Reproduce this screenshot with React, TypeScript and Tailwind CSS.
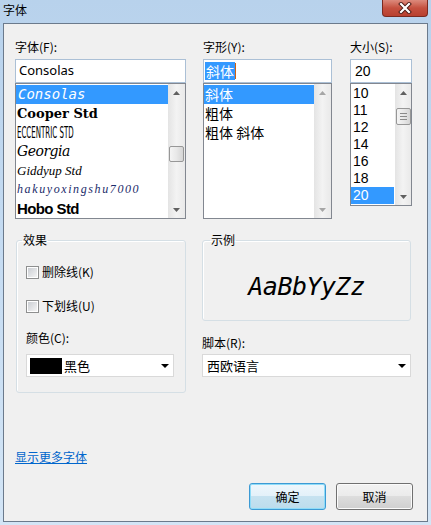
import React from "react";

type ArrowProps = { up?: boolean; light?: boolean };

function Arrow({ up, light }: ArrowProps) {
  return (
    <svg width="7" height="4" viewBox="0 0 7 4" className="block">
      <path d={up ? "M3.5 0 L7 4 L0 4 Z" : "M0 0 L7 0 L3.5 4 Z"} fill={light ? "#a6a6a6" : "#606060"} />
    </svg>
  );
}

type ScrollProps = { thumbClass?: string; grip?: boolean; light?: boolean; className: string };

function ScrollBar({ thumbClass, grip, light, className }: ScrollProps) {
  return (
    <div className={`flex flex-col bg-gradient-to-r from-[#e4e4e4] via-[#f3f3f3] to-[#e9e9e9] ${className}`}>
      <div className="h-[17px] flex items-center justify-center shrink-0">
        <Arrow up light={light} />
      </div>
      <div className="flex-1">
        {thumbClass && (
          <div
            className={`mx-auto w-[15px] rounded-[2px] border border-[#979797] bg-gradient-to-r from-[#f4f4f4] via-[#e8e8e8] to-[#d5d5d5] flex flex-col items-center justify-center gap-[2px] ${thumbClass}`}
          >
            {grip && (
              <>
                <div className="w-[7px] h-px bg-[#8a8a8a]" />
                <div className="w-[7px] h-px bg-[#8a8a8a]" />
                <div className="w-[7px] h-px bg-[#8a8a8a]" />
              </>
            )}
          </div>
        )}
      </div>
      <div className="h-[17px] flex items-center justify-center shrink-0">
        <Arrow light={light} />
      </div>
    </div>
  );
}

function CheckBox({ label }: { label: string }) {
  return (
    <div className="flex items-center h-[16px]">
      <div className="w-[13px] h-[13px] border border-[#8e8f8f] bg-white p-px">
        <div className="w-full h-full bg-gradient-to-br from-[#cbced3] to-[#f4f4f4]" />
      </div>
      <span className="ml-[3px] leading-[16px]">{label}</span>
    </div>
  );
}

function ComboArrow() {
  return (
    <svg width="8" height="4" viewBox="0 0 8 4" className="block">
      <path d="M0 0 L8 0 L4 4 Z" fill="#000" />
    </svg>
  );
}

const sizes = ["10", "11", "12", "14", "16", "18", "20"];

export default function App() {
  return (
    <div className="w-[431px] h-[525px] flex flex-col bg-gradient-to-b from-[#b8d2ec] via-[#c6dcf2] to-[#d3e5f6] font-['Noto_Sans_CJK_SC',sans-serif] text-[12px] text-black overflow-hidden">
      {/* title bar */}
      <div className="h-[23px] flex items-start shrink-0">
        <span className="ml-[3px] mt-[2px] leading-[16px]">字体</span>
        <div className="ml-auto mr-[3px] w-[46px] h-[17px] rounded-b-[4px] border border-t-0 border-[#7a2a20] bg-gradient-to-b from-[#dc8a7c] via-[#c5503f] to-[#b8402f] flex items-center justify-center">
          <svg width="14" height="12" viewBox="0 0 14 12">
            <path d="M3 2 L11 10 M11 2 L3 10" stroke="#4a1a14" strokeWidth="4" strokeLinecap="square" />
            <path d="M3 2 L11 10 M11 2 L3 10" stroke="#ffffff" strokeWidth="2.2" strokeLinecap="square" />
          </svg>
        </div>
      </div>

      {/* client area */}
      <div className="mx-[3px] mb-[3px] flex-1 border border-[#6b7a8c] bg-[#f0f0f0] flex flex-col pt-[15px] pl-[11px] pr-[14px] pb-[11px]">
        {/* lists row */}
        <div className="flex items-start">
          {/* font */}
          <div className="w-[171px] flex flex-col">
            <div className="h-[16px] leading-[16px]">字体(F):</div>
            <div className="mt-[4px] h-[24px] border border-[#abc0d6] bg-white flex items-center pl-[3px] text-[13px] font-['Noto_Sans',sans-serif]">
              Consolas
            </div>
            <div className="h-[136px] border border-[#828790] bg-white flex">
              <div className="w-[152px] pt-px flex flex-col leading-[19px]">
                <div className="h-[19px] bg-[#3399ff] text-white flex items-center pl-[2px] text-[14px] italic font-['DejaVu_Sans_Mono',monospace]">
                  Consolas
                </div>
                <div className="h-[19px] flex items-center pl-[1px] text-[13px] font-black font-['DejaVu_Serif',serif]">
                  Cooper Std
                </div>
                <div className="h-[19px] flex items-center pl-[1px] overflow-hidden">
                  <span className="inline-block origin-left scale-x-[0.44] text-[16px] font-['DejaVu_Sans',sans-serif] whitespace-nowrap">
                    ECCENTRIC STD
                  </span>
                </div>
                <div className="h-[19px] flex items-center pl-[1px] text-[14px] italic font-['DejaVu_Serif',serif] tracking-[-0.5px]">
                  Georgia
                </div>
                <div className="h-[19px] flex items-center pl-[1px] text-[13px] italic font-['Liberation_Serif',serif]">
                  Giddyup Std
                </div>
                <div className="h-[19px] flex items-center pl-[1px] text-[12px] italic font-['Liberation_Serif',serif] tracking-[1.6px] text-[#1a2a6a]">
                  hakuyoxingshu7000
                </div>
                <div className="h-[19px] flex items-center pl-[1px] text-[15px] font-bold font-['Liberation_Sans',sans-serif] tracking-[-0.6px]">
                  Hobo Std
                </div>
              </div>
              <ScrollBar className="w-[17px] ml-auto" thumbClass="mt-[45px] h-[16px]" />
            </div>
          </div>

          {/* style */}
          <div className="ml-[17px] w-[129px] flex flex-col">
            <div className="h-[16px] leading-[16px]">字形(Y):</div>
            <div className="mt-[4px] h-[24px] border border-[#abc0d6] bg-white flex items-center pl-[1px] text-[14px]">
              <span className="bg-[#3399ff] text-white leading-[18px] px-px">斜体</span>
              <span className="w-px h-[16px] bg-[#d06010]" />
            </div>
            <div className="h-[136px] border border-[#828790] bg-white flex">
              <div className="w-[111px] pt-px flex flex-col text-[14px] leading-[19px]">
                <div className="h-[19px] bg-[#3399ff] text-white flex items-center pl-[1px]">斜体</div>
                <div className="h-[19px] flex items-center pl-[1px]">粗体</div>
                <div className="h-[19px] flex items-center pl-[1px]">粗体 斜体</div>
              </div>
              <ScrollBar className="w-[17px] ml-auto" light />
            </div>
          </div>

          {/* size */}
          <div className="ml-[18px] w-[62px] flex flex-col">
            <div className="h-[16px] leading-[16px]">大小(S):</div>
            <div className="mt-[4px] h-[24px] border border-[#abc0d6] bg-white flex items-center pl-[4px] text-[14px] font-['Liberation_Sans',sans-serif]">
              20
            </div>
            <div className="h-[123px] border border-[#828790] bg-white flex">
              <div className="w-[43px] pt-px flex flex-col text-[14px] leading-[17px] font-['Liberation_Sans',sans-serif]">
                {sizes.map((s) => (
                  <div
                    key={s}
                    className={`h-[17px] flex items-center pl-[2px] ${s === "20" ? "bg-[#3399ff] text-white" : ""}`}
                  >
                    {s}
                  </div>
                ))}
              </div>
              <ScrollBar className="w-[16px] ml-auto" thumbClass="mt-[7px] h-[17px]" grip />
            </div>
          </div>
        </div>

        {/* groups row */}
        <div className="mt-[13px] flex items-start">
          <fieldset className="ml-px w-[170px] border border-[#d5dfe5] rounded-[3px] pl-[9px] pb-[15px] shadow-[inset_1px_1px_0_#ffffff]">
            <legend className="ml-[-4px] px-px leading-[16px]">效果</legend>
            <div className="mt-[16px]">
              <CheckBox label="删除线(K)" />
            </div>
            <div className="mt-[18px]">
              <CheckBox label="下划线(U)" />
            </div>
            <div className="mt-[16px] h-[16px] leading-[16px]">颜色(C):</div>
            <div className="mt-[8px] w-[148px] h-[23px] border border-[#d9d9d9] bg-white flex items-center pl-[3px] pr-[4px]">
              <div className="w-[32px] h-[16px] bg-black" />
              <span className="ml-[2px] text-[13px]">黑色</span>
              <div className="ml-auto">
                <ComboArrow />
              </div>
            </div>
          </fieldset>

          <div className="ml-[16px] w-[209px] flex flex-col">
            <fieldset className="border border-[#d5dfe5] rounded-[3px] shadow-[inset_1px_1px_0_#ffffff]">
              <legend className="ml-[7px] px-px leading-[16px]">示例</legend>
              <div className="h-[72px] pt-[5px] flex items-center justify-center text-[25px] italic font-['DejaVu_Sans_Mono',monospace] tracking-[-0.5px]">
                AaBbYyZz
              </div>
            </fieldset>
            <div className="mt-[14px] h-[16px] leading-[16px]">脚本(R):</div>
            <div className="mt-[3px] h-[23px] border border-[#d9d9d9] bg-white flex items-center pl-[4px] pr-[4px]">
              <span className="text-[13px]">西欧语言</span>
              <div className="ml-auto">
                <ComboArrow />
              </div>
            </div>
          </div>
        </div>

        {/* link */}
        <div className="mt-[56px] h-[16px] leading-[16px]">
          <span className="text-[#0066cc] underline">显示更多字体</span>
        </div>

        {/* buttons */}
        <div className="mt-[18px] flex justify-end gap-[10px]">
          <button className="w-[77px] h-[27px] rounded-[3px] border border-[#3c9ad4] shadow-[0_0_0_1px_#8fdcf8_inset] bg-[linear-gradient(to_bottom,#eef7fc_0%,#e3f1f9_48%,#c6e2f0_50%,#bcdcec_100%)] text-[12px] leading-[16px]">
            确定
          </button>
          <button className="w-[77px] h-[27px] rounded-[3px] border border-[#707070] shadow-[0_0_0_1px_#fbfbfb_inset] bg-[linear-gradient(to_bottom,#f2f2f2_0%,#ebebeb_48%,#dddddd_50%,#cfcfcf_100%)] text-[12px] leading-[16px]">
            取消
          </button>
        </div>
      </div>
    </div>
  );
}
